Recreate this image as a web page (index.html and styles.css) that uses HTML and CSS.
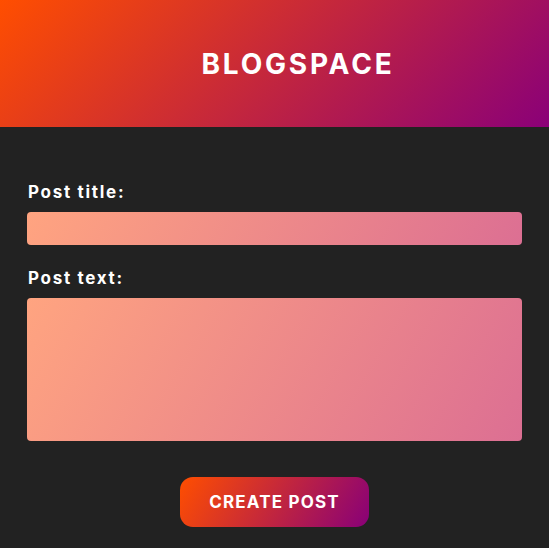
FILE: index.html
```html
<!DOCTYPE html>
<html>
<head>
<meta charset="utf-8">
<link rel="stylesheet" href="styles.css">
</head>
<body>
<header class="header">
  <h1 class="brand">BLOGSPACE</h1>
</header>
<main class="content">
  <form class="post-form">
    <label class="label" for="title">Post title:</label>
    <input class="field" id="title" type="text">
    <label class="label" for="text">Post text:</label>
    <textarea class="field area" id="text"></textarea>
    <button class="btn" type="button">CREATE POST</button>
  </form>
</main>
</body>
</html>
```
FILE: styles.css
```css
* { box-sizing: border-box; }
html, body { margin: 0; padding: 0; }
body {
  background: #222222;
  font-family: "Inter", "DejaVu Sans", sans-serif;
  color: #ffffff;
  height: 548px;
  overflow: hidden;
}
.header {
  height: 127px;
  background: linear-gradient(135deg, #ff4e00, #8a0078);
  display: flex;
  align-items: center;
  justify-content: center;
  padding-left: 47px;
}
.brand {
  margin: 0;
  font-size: 28px;
  font-weight: 700;
  letter-spacing: 2.8px;
}
.content {
  padding: 55px 27px 0 27px;
}
.post-form {
  display: flex;
  flex-direction: column;
}
.label {
  font-size: 17px;
  font-weight: 700;
  letter-spacing: 1.7px;
  line-height: 20px;
  margin-left: 1px;
  margin-bottom: 10px;
}
.field {
  border: none;
  border-radius: 4px;
  height: 33px;
  background: linear-gradient(120deg, #ffa480, #dc6f93);
  margin-bottom: 23px;
  width: 495px;
}
.area {
  height: 143px;
  resize: none;
  margin-bottom: 36px;
}
.btn {
  align-self: center;
  width: 189px;
  height: 50px;
  border: none;
  border-radius: 13px;
  background: linear-gradient(120deg, #ff4e00, #880078);
  color: #ffffff;
  font-family: "Inter", "DejaVu Sans", sans-serif;
  font-size: 17px;
  font-weight: 700;
  letter-spacing: 1.2px;
}
```
